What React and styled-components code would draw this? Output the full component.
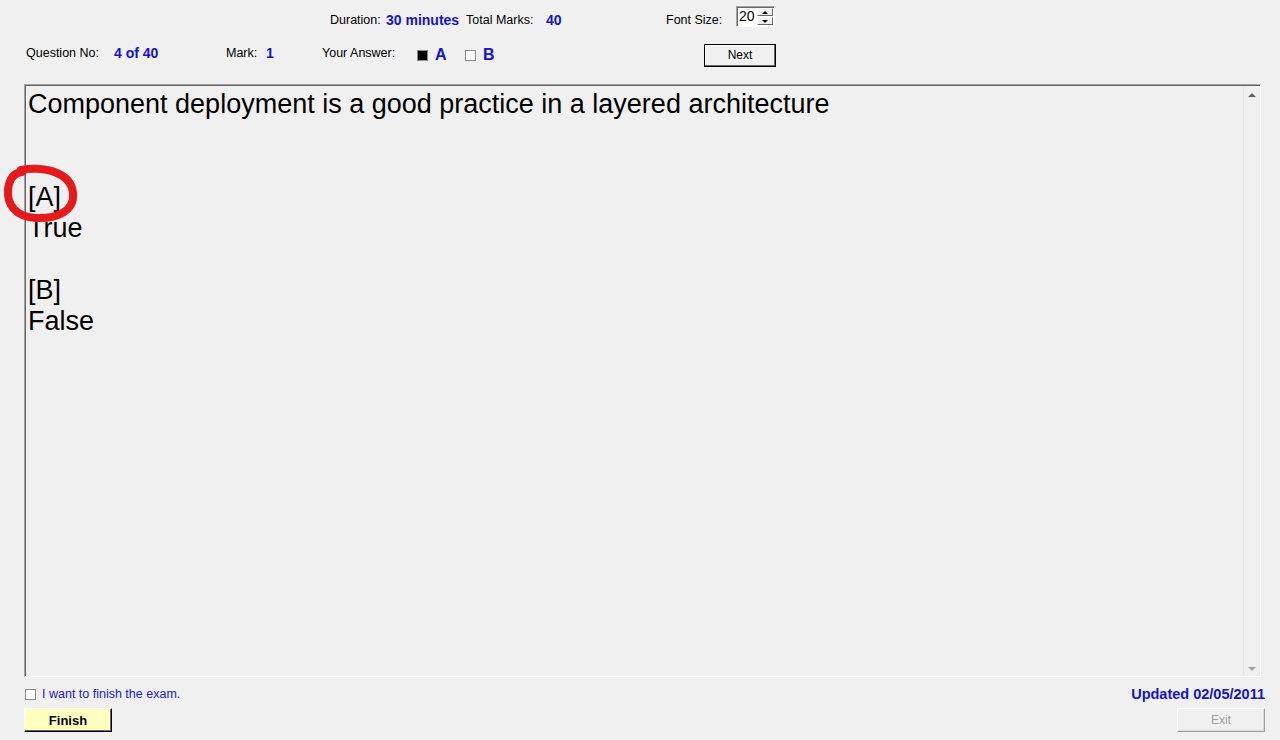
import React from "react";
import styled, { createGlobalStyle } from "styled-components";

const Global = createGlobalStyle`
  html, body { margin: 0; padding: 0; background: #f0f0f0; }
  body { font-family: "Liberation Sans", Arial, sans-serif; width: 1280px; height: 740px; overflow: hidden; }
  * { box-sizing: border-box; }
`;

const Page = styled.div`
  position: relative;
  width: 1280px;
  height: 740px;
  background: #f0f0f0;
  display: flex;
  flex-direction: column;
`;

const TopRow = styled.div`
  height: 40px;
  display: flex;
  align-items: center;
  padding-left: 330px;
`;

const SecondRow = styled.div`
  height: 44px;
  display: flex;
  align-items: flex-start;
  padding-top: 4px;
  padding-left: 26px;
`;

const Item = styled.div`
  display: flex;
  align-items: center;
  flex: none;
  width: ${(p) => (p.$w ? `${p.$w}px` : "auto")};
  margin-top: ${(p) => p.$mt || 0}px;
  height: ${(p) => p.$h || 22}px;
`;

const Label = styled.span`
  font-size: 12.5px;
  color: #000;
  white-space: nowrap;
`;

const Value = styled.span`
  font-size: 14px;
  font-weight: bold;
  color: #1414c8;
  white-space: nowrap;
`;

const Letter = styled.span`
  font-size: 16px;
  font-weight: bold;
  color: #1414c8;
  margin-left: 7px;
`;

const Check = styled.span`
  display: inline-block;
  flex: none;
  width: 11px;
  height: 11px;
  border: 1px solid #8a8a8a;
  background: ${(p) => (p.$checked ? "#000" : "#fff")};
`;

const Spin = styled.div`
  display: flex;
  height: 21px;
  border-top: 1px solid #a0a0a0;
  border-left: 1px solid #a0a0a0;
  border-bottom: 1px solid #fff;
  border-right: 1px solid #fff;
  box-shadow: inset 1px 1px 0 #696969;
  background: #fff;
`;

const SpinInput = styled.div`
  width: 20px;
  font-size: 14px;
  padding-left: 2px;
  padding-top: 1px;
  line-height: 16px;
  color: #000;
`;

const SpinButtons = styled.div`
  width: 17px;
  display: flex;
  flex-direction: column;
  padding: 1px 1px 1px 0;
  gap: 1px;
`;

const SpinBtn = styled.div`
  flex: 1;
  background: #f0f0f0;
  border-top: 1px solid #fff;
  border-left: 1px solid #fff;
  border-right: 1px solid #696969;
  border-bottom: 1px solid #696969;
  display: flex;
  align-items: center;
  justify-content: center;
`;

const Arrow = styled.span`
  width: 0;
  height: 0;
  border-left: 3px solid transparent;
  border-right: 3px solid transparent;
  ${(p) => (p.$down ? "border-top: 3px solid #000;" : "border-bottom: 3px solid #000;")}
`;

const Button = styled.button`
  font-family: "Liberation Sans", Arial, sans-serif;
  width: ${(p) => p.$w}px;
  height: ${(p) => p.$h}px;
  padding: 0;
  font-size: ${(p) => (p.$bold ? 13 : 12)}px;
  font-weight: ${(p) => (p.$bold ? "bold" : "normal")};
  color: ${(p) => (p.$disabled ? "#a0a0a0" : "#000")};
  background: ${(p) => p.$bg || "#f0f0f0"};
  border-top: 1px solid ${(p) => (p.$dark ? "#000" : "#fff")};
  border-left: 1px solid ${(p) => (p.$dark ? "#000" : "#fff")};
  border-right: 1px solid ${(p) => (p.$disabled ? "#a0a0a0" : "#000")};
  border-bottom: 1px solid ${(p) => (p.$disabled ? "#a0a0a0" : "#000")};
  box-shadow: ${(p) =>
    p.$dark
      ? "inset -1px -1px 0 #696969, inset 1px 1px 0 #fff"
      : p.$disabled
      ? "inset -1px -1px 0 #d8d8d8"
      : "inset -1px -1px 0 #696969"};
  cursor: default;
`;

const Body = styled.div`
  margin-left: 24px;
  width: 1237px;
  height: 593px;
  display: flex;
  border-top: 1px solid #a0a0a0;
  border-left: 1px solid #a0a0a0;
  border-bottom: 1px solid #fff;
  border-right: 1px solid #fff;
  box-shadow: inset 1px 1px 0 #696969;
`;

const TextArea = styled.div`
  flex: 1;
  padding: 4px 0 0 3px;
  font-size: 27px;
  line-height: 31px;
  color: #000;
`;

const Line = styled.div`
  height: 31px;
  white-space: nowrap;
`;

const ScrollBar = styled.div`
  width: 17px;
  margin: 2px 0 1px 0;
  background: #f0f0f0;
  border-left: 1px solid #e3e3e3;
  display: flex;
  flex-direction: column;
  justify-content: space-between;
  align-items: center;
  padding: 6px 0 4px;
`;

const ScrollArrow = styled.span`
  width: 0;
  height: 0;
  border-left: 4px solid transparent;
  border-right: 4px solid transparent;
  ${(p) => (p.$down ? "border-top: 4px solid #a0a0a0;" : "border-bottom: 4px solid #606060;")}
`;

const Footer = styled.div`
  flex: 1;
  display: flex;
  justify-content: space-between;
  padding: 10px 15px 0 24px;
`;

const FooterCol = styled.div`
  display: flex;
  flex-direction: column;
  align-items: ${(p) => (p.$right ? "flex-end" : "flex-start")};
  gap: 7px;
`;

const FinishRow = styled.label`
  display: flex;
  align-items: center;
  height: 14px;
  gap: 6px;
  padding-left: 1px;
`;

const FinishText = styled.span`
  font-size: 12.5px;
  color: #2020c0;
`;

const Updated = styled.span`
  font-size: 14.5px;
  font-weight: bold;
  color: #1414c8;
  height: 14px;
  line-height: 14px;
`;

const Annotation = styled.svg`
  position: absolute;
  left: 0;
  top: 0;
  pointer-events: none;
`;

export default function App() {
  return (
    <>
      <Global />
      <Page>
        <TopRow>
          <Item $w={56}><Label>Duration:</Label></Item>
          <Item $w={80}><Value>30 minutes</Value></Item>
          <Item $w={80}><Label>Total Marks:</Label></Item>
          <Item $w={120}><Value>40</Value></Item>
          <Item $w={70}><Label>Font Size:</Label></Item>
          <Item $mt={-7}>
            <Spin>
              <SpinInput>20</SpinInput>
              <SpinButtons>
                <SpinBtn><Arrow /></SpinBtn>
                <SpinBtn><Arrow $down /></SpinBtn>
              </SpinButtons>
            </Spin>
          </Item>
        </TopRow>
        <SecondRow>
          <Item $h={17} $w={88}><Label>Question No:</Label></Item>
          <Item $h={17} $w={112}><Value>4 of 40</Value></Item>
          <Item $h={17} $w={40}><Label>Mark:</Label></Item>
          <Item $h={17} $w={56}><Value>1</Value></Item>
          <Item $h={17} $w={95}><Label>Your Answer:</Label></Item>
          <Item $h={22} $w={48}>
            <Check $checked />
            <Letter>A</Letter>
          </Item>
          <Item $h={22} $w={239}>
            <Check />
            <Letter>B</Letter>
          </Item>
          <Item $h={22}>
            <Button $w={72} $h={23} $dark>Next</Button>
          </Item>
        </SecondRow>
        <Body>
          <TextArea>
            <Line>Component deployment is a good practice in a layered architecture</Line>
            <Line />
            <Line />
            <Line>[A]</Line>
            <Line>True</Line>
            <Line />
            <Line>[B]</Line>
            <Line>False</Line>
          </TextArea>
          <ScrollBar>
            <ScrollArrow />
            <ScrollArrow $down />
          </ScrollBar>
        </Body>
        <Footer>
          <FooterCol>
            <FinishRow>
              <Check />
              <FinishText>I want to finish the exam.</FinishText>
            </FinishRow>
            <Button $w={88} $h={24} $bold $bg="#ffffc0">Finish</Button>
          </FooterCol>
          <FooterCol $right>
            <Updated>Updated 02/05/2011</Updated>
            <Button $w={88} $h={24} $disabled>Exit</Button>
          </FooterCol>
        </Footer>
        <Annotation width="100" height="240" viewBox="0 0 100 240">
          <path
            d="M 21 170 C 44 166, 71 172, 73 193 C 75 212, 55 219, 36 218 C 16 217, 7 205, 8 190 C 9 180, 13 173, 22 172"
            fill="none"
            stroke="#e41a1c"
            strokeWidth="8"
            strokeLinecap="round"
          />
        </Annotation>
      </Page>
    </>
  );
}
